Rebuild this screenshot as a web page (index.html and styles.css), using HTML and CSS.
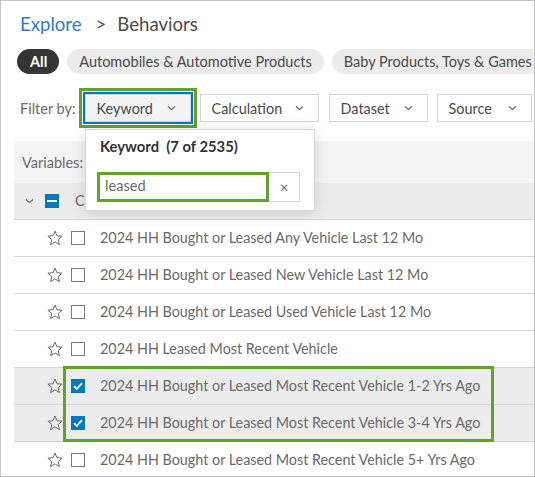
FILE: index.html
```html
<!DOCTYPE html>
<html lang="en">
<head>
<meta charset="utf-8">
<title>Explore &gt; Behaviors</title>
<link rel="stylesheet" href="styles.css">
</head>
<body>
<div class="frame">
  <nav class="crumbs"><span class="crumb-link">Explore</span><span class="sep">&gt;</span><span class="crumb-cur">Behaviors</span></nav>

  <div class="chips">
    <span class="chip chip-active">All</span>
    <span class="chip">Automobiles &amp; Automotive Products</span>
    <span class="chip">Baby Products, Toys &amp; Games</span>
  </div>

  <div class="filters">
    <span class="filter-label">Filter by:</span>
    <button class="filter filter-open w-keyword">Keyword <svg class="chev" width="9" height="6" viewBox="0 0 9 6"><polyline points="1,1.5 4.5,4.5 8,1.5"/></svg></button>
    <button class="filter w-calc">Calculation <svg class="chev" width="9" height="6" viewBox="0 0 9 6"><polyline points="1,1.5 4.5,4.5 8,1.5"/></svg></button>
    <button class="filter w-dataset">Dataset <svg class="chev" width="9" height="6" viewBox="0 0 9 6"><polyline points="1,1.5 4.5,4.5 8,1.5"/></svg></button>
    <button class="filter w-source">Source <svg class="chev" width="9" height="6" viewBox="0 0 9 6"><polyline points="1,1.5 4.5,4.5 8,1.5"/></svg></button>
  </div>

  <div class="table">
    <div class="vars-row">Variables:</div>
    <div class="group-row">
      <svg class="group-chev" width="9" height="6" viewBox="0 0 9 6"><polyline points="1,1.5 4.5,4.5 8,1.5"/></svg>
      <span class="cb cb-mixed"></span>
      <span class="group-name">Cars</span>
    </div>
    <ul class="rows">
      <li class="row"><svg class="star" width="16" height="16" viewBox="0 0 16 16"><polygon points="8,1 9.9,5.7 15.1,6.2 11.2,9.5 12.4,14.6 8,11.9 3.6,14.6 4.8,9.5 0.9,6.2 6.1,5.7"/></svg><span class="cb"></span><span class="row-text">2024 HH Bought or Leased Any Vehicle Last 12 Mo</span></li>
      <li class="row"><svg class="star" width="16" height="16" viewBox="0 0 16 16"><polygon points="8,1 9.9,5.7 15.1,6.2 11.2,9.5 12.4,14.6 8,11.9 3.6,14.6 4.8,9.5 0.9,6.2 6.1,5.7"/></svg><span class="cb"></span><span class="row-text">2024 HH Bought or Leased New Vehicle Last 12 Mo</span></li>
      <li class="row"><svg class="star" width="16" height="16" viewBox="0 0 16 16"><polygon points="8,1 9.9,5.7 15.1,6.2 11.2,9.5 12.4,14.6 8,11.9 3.6,14.6 4.8,9.5 0.9,6.2 6.1,5.7"/></svg><span class="cb"></span><span class="row-text">2024 HH Bought or Leased Used Vehicle Last 12 Mo</span></li>
      <li class="row"><svg class="star" width="16" height="16" viewBox="0 0 16 16"><polygon points="8,1 9.9,5.7 15.1,6.2 11.2,9.5 12.4,14.6 8,11.9 3.6,14.6 4.8,9.5 0.9,6.2 6.1,5.7"/></svg><span class="cb"></span><span class="row-text">2024 HH Leased Most Recent Vehicle</span></li>
      <li class="row row-selected"><svg class="star" width="16" height="16" viewBox="0 0 16 16"><polygon points="8,1 9.9,5.7 15.1,6.2 11.2,9.5 12.4,14.6 8,11.9 3.6,14.6 4.8,9.5 0.9,6.2 6.1,5.7"/></svg><span class="cb cb-checked"><svg width="14" height="14" viewBox="0 0 14 14"><polyline points="3,7.2 5.8,10 11,4.2"/></svg></span><span class="row-text">2024 HH Bought or Leased Most Recent Vehicle 1-2 Yrs Ago</span></li>
      <li class="row row-selected"><svg class="star" width="16" height="16" viewBox="0 0 16 16"><polygon points="8,1 9.9,5.7 15.1,6.2 11.2,9.5 12.4,14.6 8,11.9 3.6,14.6 4.8,9.5 0.9,6.2 6.1,5.7"/></svg><span class="cb cb-checked"><svg width="14" height="14" viewBox="0 0 14 14"><polyline points="3,7.2 5.8,10 11,4.2"/></svg></span><span class="row-text">2024 HH Bought or Leased Most Recent Vehicle 3-4 Yrs Ago</span></li>
      <li class="row"><svg class="star" width="16" height="16" viewBox="0 0 16 16"><polygon points="8,1 9.9,5.7 15.1,6.2 11.2,9.5 12.4,14.6 8,11.9 3.6,14.6 4.8,9.5 0.9,6.2 6.1,5.7"/></svg><span class="cb"></span><span class="row-text">2024 HH Bought or Leased Most Recent Vehicle 5+ Yrs Ago</span></li>
    </ul>
  </div>

  <div class="popover">
    <div class="pop-title">Keyword&nbsp; (7 of 2535)</div>
    <div class="pop-input-row">
      <span class="pop-input">leased</span>
      <span class="pop-clear">&times;</span>
    </div>
  </div>

  <div class="annot-rows"></div>
</div>
</body>
</html>
```

FILE: styles.css
```css
body {
  margin: 0;
  font-family: Lato, "Open Sans", sans-serif;
}

.frame {
  position: relative;
  width: 535px;
  height: 477px;
  box-sizing: border-box;
  border: 1px solid #c4c4c4;
  overflow: hidden;
  background: #fff;
}

.crumbs {
  padding: 11px 0 0 19px;
  height: 24px;
  font-size: 18.6px;
  line-height: 24px;
  color: #4c4c4c;
}

.crumb-link {
  color: #2f7db8;
}

.sep {
  margin: 0 11px 0 14px;
  color: #5a5a5a;
}

.chips {
  display: flex;
  gap: 8px;
  margin-top: 13px;
  padding-left: 16px;
  white-space: nowrap;
}

.chip {
  flex: none;
  height: 25px;
  line-height: 25px;
  padding: 0 12px;
  border-radius: 13px;
  background: #ebebeb;
  color: #4a4a4a;
  font-size: 14.5px;
}

.chip-active {
  padding: 0 12px 0 13px;
  background: #353535;
  color: #fff;
  font-weight: 700;
}

.filters {
  display: flex;
  align-items: center;
  gap: 9px;
  height: 28px;
  margin-top: 20px;
  padding-left: 19px;
}

.filter-label {
  font-size: 14.5px;
  color: #6a6a6a;
  margin-right: 0;
}

.filter {
  box-sizing: border-box;
  height: 28px;
  display: flex;
  align-items: center;
  justify-content: space-between;
  padding: 0 14px 0 11px;
  border: 1px solid #d4d4d4;
  background: #fff;
  font-family: inherit;
  font-size: 14.4px;
  color: #4a4a4a;
}

.filter-open {
  background: #f3f3f3;
  outline: 2px solid #0079c1;
  box-shadow: 0 0 0 3px #fff, 0 0 0 6px #61a22d;
}

.w-keyword { width: 106px; }
.w-calc { width: 119px; }
.w-dataset { width: 99px; margin-left: 1px; }
.w-source { width: 95px; }

.chev polyline,
.group-chev polyline {
  fill: none;
  stroke: #6a6a6a;
  stroke-width: 1.2;
}

.table {
  margin: 19px 0 0 13px;
}

.vars-row {
  height: 42px;
  display: flex;
  align-items: center;
  padding-left: 8px;
  background: #f4f4f4;
  font-size: 14.5px;
  color: #6a6a6a;
}

.group-row {
  height: 36px;
  display: flex;
  align-items: center;
  padding-left: 11px;
  background: #ececec;
  border-bottom: 1px solid #d6d6d6;
  font-size: 14.5px;
  color: #6a6a6a;
}

.group-chev {
  margin-right: 11px;
}

.group-row .cb {
  margin-right: 16px;
}

.group-name {
  margin-bottom: 2px;
}

.rows {
  list-style: none;
  margin: 0;
  padding: 0;
}

.row {
  height: 36px;
  display: flex;
  align-items: center;
  padding-left: 33px;
  border-bottom: 1px solid #d6d6d6;
  font-size: 14.35px;
  color: #6a6a6a;
  white-space: nowrap;
}

.row-text {
  margin-bottom: 2px;
}

.row-selected {
  background: #ececec;
}

.star {
  flex: none;
  margin-right: 8px;
}

.star polygon {
  fill: none;
  stroke: #6a6a6a;
  stroke-width: 1;
  stroke-linejoin: round;
}

.cb {
  flex: none;
  box-sizing: border-box;
  width: 14px;
  height: 14px;
  border: 1px solid #7a7a7a;
  background: #fff;
  margin-right: 15px;
}

.cb-checked {
  border: none;
  background: #0079c1;
}

.cb-checked svg {
  display: block;
}

.cb-checked polyline {
  fill: none;
  stroke: #fff;
  stroke-width: 1.8;
}

.cb-mixed {
  border: 2px solid #0079c1;
  background: #0079c1;
  display: flex;
  align-items: center;
  justify-content: center;
}

.cb-mixed::after {
  content: "";
  width: 10px;
  height: 2px;
  background: #fff;
}

.popover {
  position: absolute;
  left: 84px;
  top: 128px;
  width: 230px;
  height: 82px;
  box-sizing: border-box;
  padding: 0 13px 0 11px;
  border: 1px solid #d9d9d9;
  background: #fff;
  box-shadow: 0 2px 14px rgba(0, 0, 0, 0.14);
}

.pop-title {
  margin-top: 6px;
  padding-left: 3px;
  line-height: 20px;
  font-size: 14.8px;
  font-weight: 700;
  color: #323232;
}

.pop-input-row {
  display: flex;
  height: 30px;
  margin-top: 16px;
}

.pop-input {
  box-sizing: border-box;
  width: 172px;
  height: 30px;
  border: 3px solid #61a22d;
  padding-left: 5px;
  line-height: 22px;
  font-size: 14.6px;
  color: #6a6a6a;
}

.pop-clear {
  box-sizing: border-box;
  width: 31px;
  height: 30px;
  border: 1px solid #d4d4d4;
  border-left: none;
  display: flex;
  align-items: center;
  justify-content: center;
  font-size: 15px;
  color: #6a6a6a;
}

.annot-rows {
  position: absolute;
  left: 62px;
  top: 365px;
  width: 431px;
  height: 76px;
  box-sizing: border-box;
  border: 3px solid #61a22d;
}
```
